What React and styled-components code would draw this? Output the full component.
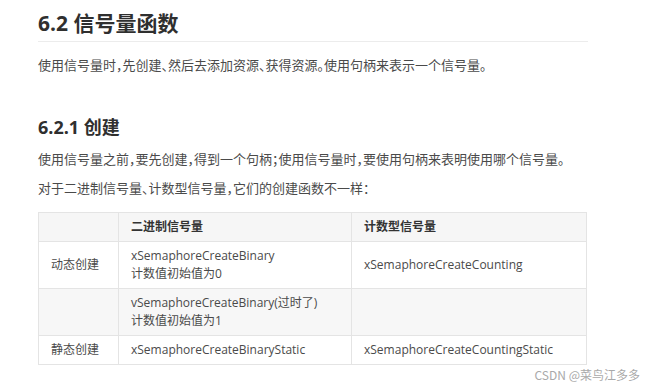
import React from 'react';
import styled, { createGlobalStyle } from 'styled-components';

const GlobalStyle = createGlobalStyle`
  body {
    margin: 0;
    background: #ffffff;
    font-family: "Open Sans", "Noto Sans CJK SC", sans-serif;
  }
`;

const rows = [
  { kind: "动态创建", binary: ["xSemaphoreCreateBinary", "计数值初始值为0"], counting: "xSemaphoreCreateCounting" },
  { kind: "", binary: ["vSemaphoreCreateBinary(过时了)", "计数值初始值为1"], counting: "", shaded: true },
  { kind: "静态创建", binary: ["xSemaphoreCreateBinaryStatic"], counting: "xSemaphoreCreateCountingStatic" },
];

function App() {
  return (
    <Page>
      <GlobalStyle />
      <Article>
        <Title>6.2 信号量函数</Title>
        <Para>使用信号量时，先创建、然后去添加资源、获得资源。使用句柄来表示一个信号量。</Para>
        <SubTitle>6.2.1 创建</SubTitle>
        <Para $gap={9}>使用信号量之前，要先创建，得到一个句柄；使用信号量时，要使用句柄来表明使用哪个信号量。</Para>
        <Para $gap={9}>对于二进制信号量、计数型信号量，它们的创建函数不一样：</Para>
        <Table>
          <colgroup>
            <col style={{ width: 80 }} />
            <col style={{ width: 233 }} />
            <col />
          </colgroup>
          <thead>
            <tr>
              <Th></Th>
              <Th>二进制信号量</Th>
              <Th>计数型信号量</Th>
            </tr>
          </thead>
          <tbody>
            {rows.map((row, index) => (
              <Row key={index} $shaded={row.shaded}>
                <Td>{row.kind}</Td>
                <Td>{row.binary.map((line, i) => (<Line key={i}>{line}</Line>))}</Td>
                <Td>{row.counting}</Td>
              </Row>
            ))}
          </tbody>
        </Table>
      </Article>
      <Watermark>CSDN @菜鸟江多多</Watermark>
    </Page>
  );
}

const Page = styled.div`
  width: 650px;
  height: 386px;
  overflow: hidden;
  background: #ffffff;
`;

const Article = styled.div`
  padding: 8px 0 0 38px;
  width: 550px;
  color: #4d4d4d;
`;

const Title = styled.h2`
  margin: 0;
  font-size: 21px;
  line-height: 30px;
  font-weight: 700;
  color: #2f2f2f;
  padding-bottom: 3px;
  border-bottom: 1px solid #ececec;
`;

const SubTitle = styled.h3`
  margin: 39px 0 0;
  font-size: 18px;
  line-height: 26px;
  font-weight: 700;
  color: #2f2f2f;
`;

const Para = styled.p`
  margin: ${p => p.$gap ?? 13}px 0 0;
  font-size: 13px;
  line-height: 20px;
  color: #4a4a4a;
  font-feature-settings: "halt";
`;

const Table = styled.table`
  margin-top: 14px;
  width: 549px;
  border-collapse: collapse;
  table-layout: fixed;
  font-size: 12px;
  color: #4a4a4a;
`;

const Th = styled.th`
  text-align: left;
  font-weight: 700;
  background: #f6f6f6;
  border: 1px solid #e4e4e4;
  padding: 5px 12px;
  line-height: 18px;
  color: #333;
`;

const Row = styled.tr`
  background: ${p => (p.$shaded ? '#f7f7f7' : '#ffffff')};
`;

const Td = styled.td`
  border: 1px solid #e4e4e4;
  padding: 5px 12px;
  line-height: 18px;
  vertical-align: middle;
`;

const Line = styled.div``;

const Watermark = styled.div`
  margin-top: 3px;
  padding-right: 10px;
  text-align: right;
  font-size: 12px;
  line-height: 14px;
  color: #a9a9a9;
  font-family: "Noto Sans CJK SC", sans-serif;
`;

export default App;
